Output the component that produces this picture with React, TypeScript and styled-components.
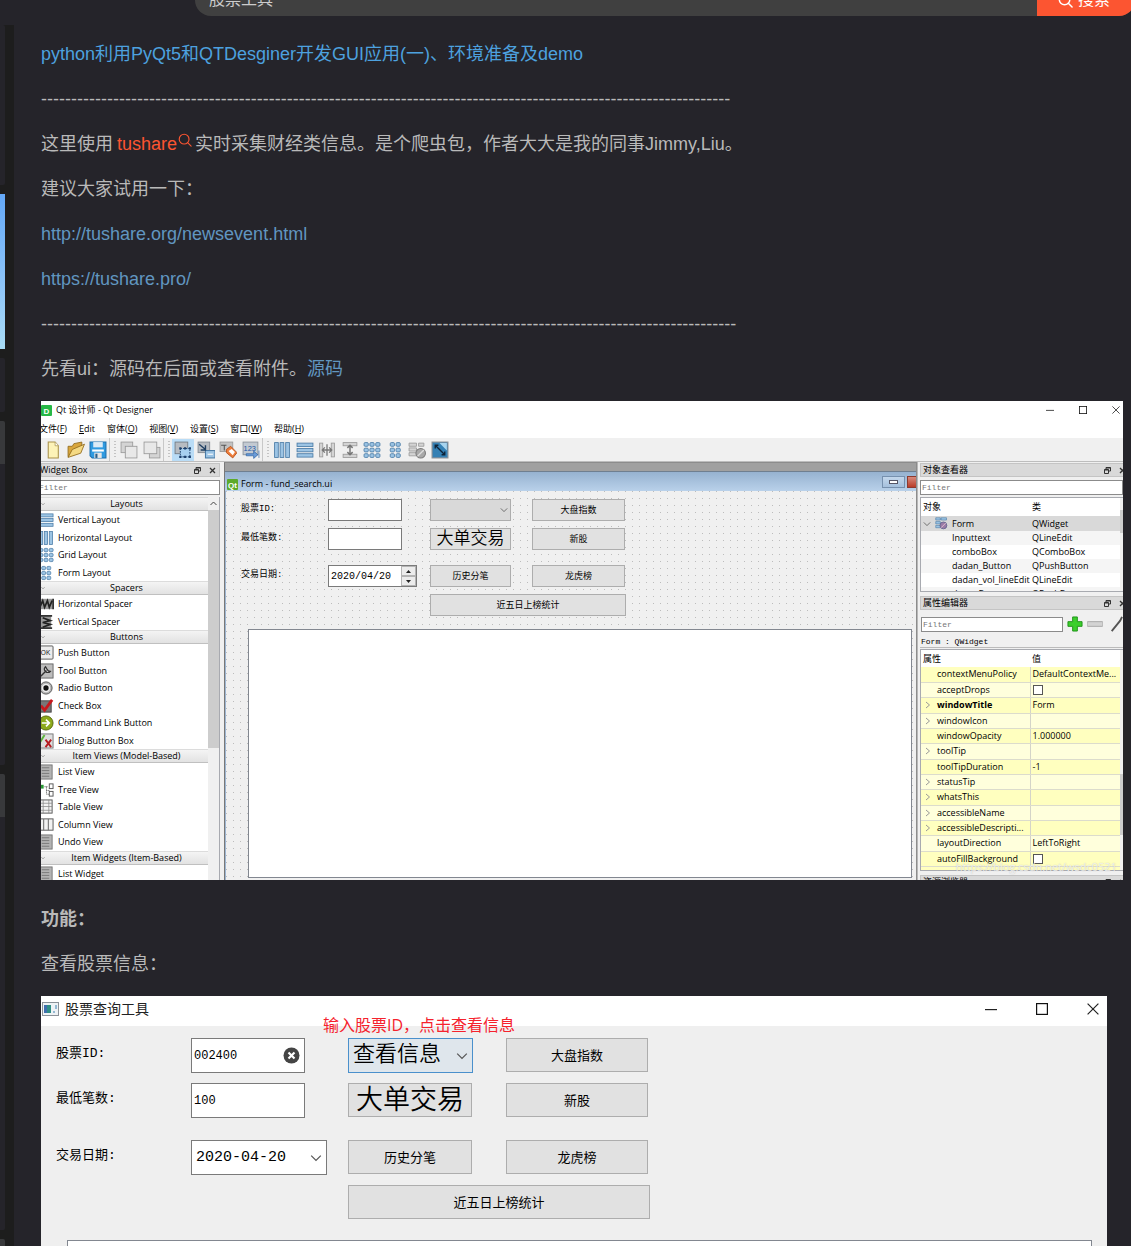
import React from 'react';
import styled, { createGlobalStyle, css } from 'styled-components';

const GlobalStyle = createGlobalStyle`
  *, *::before, *::after { box-sizing: border-box; }
  body { margin: 0; background: #1d1d1d; }
  button, input, select, textarea { font: inherit; color: inherit; margin: 0; padding: 0; border-radius: 0; }
  svg { display: block; flex: none; }
`;

const ui = `"Open Sans", "Noto Sans CJK SC", sans-serif`;
const mono = `"Liberation Mono", "Noto Sans CJK SC", monospace`;
const web = `"Liberation Sans", "Noto Sans CJK SC", sans-serif`;

/* ---------- page shell ---------- */

const Page = styled.div`
  height: 100vh;
  overflow: hidden;
  display: flex;
  flex-direction: column;
  font-family: ${web};
`;

const TopBar = styled.header`
  flex: none;
  height: 25px;
  overflow: hidden;
  display: flex;
  align-items: flex-end;
  padding: 0 0 9px 195px;
  background: #25242a;
`;

const SearchForm = styled.form`
  flex: 1;
  display: flex;
  height: 32px;
  margin-right: -4px;
  border-radius: 16px;
  overflow: hidden;
  background: #404040;
  font-size: 16px;
  line-height: 32px;
`;

const SearchInput = styled.input`
  flex: 1;
  min-width: 0;
  border: 0;
  padding-left: 14px;
  background: transparent;
  color: #ccc;
`;

const SearchButton = styled.button`
  width: 98px;
  display: flex;
  align-items: center;
  justify-content: center;
  gap: 5px;
  padding-right: 4px;
  border: 0;
  background: #fc5531;
  color: #fff;
`;

const Columns = styled.div`
  flex: 1;
  min-height: 0;
  display: flex;
  gap: 9px;
`;

const Side = styled.aside`
  flex: none;
  width: 5px;
  display: flex;
  flex-direction: column;
  gap: 9px;
`;

const SideCard = styled.div<{ $h: number; $head?: boolean }>`
  flex: none;
  height: ${p => p.$h}px;
  border-radius: 0 2px 2px 0;
  background: ${p => (p.$head ? 'linear-gradient(#38393b 43px, #25242a 43px)' : '#25242a')};
`;

const SidePicture = styled.div`
  flex: none;
  height: 155px;
  background: linear-gradient(#64a9f8, #8fc6f8 60%, #a9dcf5);
`;

const Article = styled.article`
  flex: 1;
  min-width: 0;
  display: flex;
  flex-direction: column;
  gap: 19px;
  padding: 16px 8px 0 27px;
  background: #25242a;
  color: #b9b9b9;
  font-size: 18px;
  line-height: 26px;
`;

const Para = styled.p`
  margin: 0;
  white-space: nowrap;
`;

const Link = styled.a<{ $bright?: boolean }>`
  color: ${p => (p.$bright ? '#4da1df' : '#6196c0')};
  text-decoration: none;
`;

const KeyLink = styled.a`
  color: #fc5531;
  text-decoration: none;
  margin: 0 3px 0 4px;
  svg { display: inline-block; margin-left: 1px; vertical-align: 3px; }
`;

/* ---------- designer window ---------- */

const Designer = styled.section`
  flex: none;
  height: 479px;
  margin-bottom: 7px;
  overflow: hidden;
  display: flex;
  flex-direction: column;
  position: relative;
  background: #f0f0f0;
  color: #000;
  font-family: ${ui};
  font-size: 9px;
  line-height: 14px;
`;

const TitleRow = styled.div`
  flex: none;
  height: 18px;
  display: flex;
  align-items: center;
  gap: 4px;
  background: #fff;
`;

const Caption = styled.span`
  flex: 1;
`;

const WindowButtons = styled.div<{ $gap: number; $pad: number }>`
  display: flex;
  align-items: center;
  gap: ${p => p.$gap}px;
  padding-right: ${p => p.$pad}px;
`;

const IconButton = styled.button`
  display: flex;
  align-items: center;
  justify-content: center;
  border: 0;
  background: transparent;
`;

const MenuRow = styled.nav`
  flex: none;
  height: 19px;
  display: flex;
  align-items: center;
  gap: 12px;
  margin-left: -2px;
  background: #fff;
`;

const MenuItem = styled.button`
  border: 0;
  background: transparent;
  white-space: nowrap;
  line-height: 14px;
`;

const ToolRow = styled.div`
  flex: none;
  height: 24px;
  display: flex;
  align-items: center;
  border-bottom: 1px solid #bdbdbd;
`;

const ToolGroup = styled.div`
  height: 23px;
  display: flex;
  align-items: center;
  padding: 0 0 0 1px;
`;

const Tool = styled.button<{ $on?: boolean }>`
  width: 22px;
  height: 22px;
  display: flex;
  align-items: center;
  justify-content: center;
  border: 0;
  background: ${p => (p.$on ? '#b9dcf6' : 'transparent')};
  &:nth-child(even) { width: 23px; }
`;

const Grip = styled.span`
  width: 8px;
  height: 23px;
  border-left: 1px solid #c8c8c8;
  background: repeating-linear-gradient(#c4c4c4 0 1px, transparent 1px 3px) 4px 3px / 2px 17px no-repeat;
`;

const Body = styled.div`
  flex: 1;
  min-height: 0;
  display: grid;
  grid-template-columns: 183px minmax(0, 1fr) 206px;
`;

const Dock = styled.div<{ $left?: boolean }>`
  min-width: 0;
  min-height: 0;
  display: flex;
  flex-direction: column;
  overflow: hidden;
  padding-top: 1px;
  ${p => (p.$left
    ? css`padding-right: 4px;`
    : css`border-left: 1px solid #b8b8b8; padding-left: 2px;`)}
`;

const DockHead = styled.div<{ $cut?: boolean }>`
  flex: none;
  height: 14px;
  display: flex;
  align-items: center;
  gap: 8px;
  padding: 0 3px;
  border: 1px solid #c4c4c4;
  background: #d9d9d9;
  ${p => (p.$cut ? css`padding-left: 0; text-indent: -2px;` : css`margin-right: -7px; padding-left: 2px;`)}
`;

const Filter = styled.input<{ $cut?: boolean }>`
  flex: 1;
  min-width: 0;
  height: 15px;
  border: 1px solid #8b8b8b;
  background: #fff;
  font-family: ${mono};
  font-size: 8px;
  padding-left: 1px;
  ${p => p.$cut && css`border-left: 0; padding: 0; text-indent: -2px;`}
  &::placeholder { color: #757575; opacity: 1; }
`;

const FilterRow = styled.div<{ $tall?: boolean }>`
  flex: none;
  height: ${p => (p.$tall ? 26 : 20)}px;
  display: flex;
  align-items: center;
  gap: 4px;
  padding: ${p => (p.$tall ? '2px 0 0 1px' : '0')};
`;

const WidgetList = styled.div`
  flex: 1;
  min-height: 0;
  display: flex;
  overflow: hidden;
  border-right: 1px solid #a8aab0;
  background: #fff;
`;

const Categories = styled.div`
  flex: 1;
`;

const Category = styled.h4`
  height: 14px;
  margin: 0;
  display: grid;
  grid-template-columns: 4px 1fr;
  align-items: center;
  text-align: center;
  font-weight: 400;
  line-height: 12px;
  border-top: 1px solid #dcdcdc;
  border-bottom: 1px solid #c0c0c0;
  background: linear-gradient(#f4f4f4, #e2e2e2);
`;

const Items = styled.ul`
  list-style: none;
  margin: 0 0 0 -3px;
  padding: 0;
`;

const Item = styled.li`
  height: 18px;
  display: flex;
  align-items: center;
  gap: 4px;
  &:nth-child(even) { height: 17px; }
`;

const ScrollTrack = styled.div`
  flex: none;
  width: 11px;
  background: #f0f0f0;
  display: flex;
  flex-direction: column;
  align-items: center;
`;

const ScrollArrow = styled.div`
  height: 13px;
  display: flex;
  align-items: center;
`;

const ScrollThumb = styled.div<{ $h: number }>`
  width: 100%;
  height: ${p => p.$h}px;
  background: #cdcdcd;
`;

const Mdi = styled.div`
  min-width: 0;
  display: flex;
  flex-direction: column;
  padding-top: 8px;
  border-left: 1px solid #787878;
  border-right: 1px solid #8c8c8c;
  border-top: 1px solid #8c8c8c;
  background: #a0a0a0;
`;

const FormTitle = styled.div`
  flex: none;
  height: 20px;
  display: flex;
  align-items: center;
  gap: 3px;
  padding: 5px 0 0 2px;
  border-top: 1px solid #6f7f90;
  background: linear-gradient(#96b2d0, #b9d1ea);
`;

const AeroButton = styled.button<{ $close?: boolean }>`
  width: ${p => (p.$close ? 9 : 23)}px;
  height: 12px;
  display: flex;
  align-items: center;
  justify-content: center;
  margin-bottom: 4px;
  border: 1px solid ${p => (p.$close ? '#8d3a2e' : '#7690ae')};
  border-right-width: ${p => (p.$close ? 0 : 1)}px;
  background: ${p => (p.$close ? 'linear-gradient(#d88a7c, #b93c28)' : 'linear-gradient(#c3d7ec, #a5c0dd)')};
`;

const Canvas = styled.div`
  flex: 1;
  min-height: 0;
  display: flex;
  flex-direction: column;
  padding: 8px 4px 2px 15px;
  border-left: 1px solid #9db6d2;
  background:
    linear-gradient(#c2c2c2, #c2c2c2) 0 0 / 1px 1px no-repeat,
    conic-gradient(from 270deg at 1px 1px, #bcbcbc 90deg, #f0f0f0 0) 0 0 / 7px 7px;
`;

const SmallGrid = styled.div`
  display: grid;
  grid-template-columns: 87px 102px 102px 94px;
  grid-template-rows: 29px 37px 29px 35px;
  align-items: start;
  font-family: ${mono};
`;

const BigGrid = styled(SmallGrid)`
  grid-template-columns: 135px 157px 158px 144px;
  grid-template-rows: 45px 57px 45px 55px;
  font-size: 13px;
`;

const FieldLabel = styled.label<{ $big?: boolean }>`
  line-height: ${p => (p.$big ? 32 : 21)}px;
  white-space: nowrap;
`;

const Field = styled.div<{ $w: number; $big?: boolean; $tone?: 'combo' | 'focus' }>`
  width: ${p => p.$w}px;
  height: ${p => (p.$big ? 35 : 22)}px;
  display: flex;
  align-items: center;
  padding: 0 ${p => (p.$big ? 4 : 2)}px;
  border: 1px solid ${p => (p.$tone === 'focus' ? '#4a90cc' : p.$tone ? '#adadad' : '#7a7a7a')};
  background: ${p => (p.$tone === 'focus' ? '#dfe6ec' : p.$tone ? '#d9d9d9' : '#fff')};
`;

const TextInput = styled.input<{ $size?: number }>`
  flex: 1;
  min-width: 0;
  height: 100%;
  border: 0;
  background: transparent;
  font-size: ${p => p.$size || 12}px;
  margin-left: ${p => (p.$size ? 0 : -2)}px;
`;

const Combo = styled.select`
  flex: 1;
  min-width: 0;
  height: 100%;
  border: 0;
  appearance: none;
  background: transparent;
  font-size: 22px;
  font-weight: 350;
`;

const Spin = styled.div`
  width: 15px;
  height: 20px;
  display: grid;
  grid-template-rows: 1fr 1fr;
  margin-right: -2px;
`;

const SpinButton = styled.button`
  display: flex;
  align-items: center;
  justify-content: center;
  border: 1px solid #b4b4b4;
  background: #ececec;
`;

const Push = styled.button<{ $w: number; $big?: boolean; $text?: number; $span?: boolean }>`
  width: ${p => p.$w}px;
  height: ${p => (p.$big ? 34 : 22)}px;
  padding-top: ${p => (p.$big ? 4 : 2)}px;
  overflow: hidden;
  border: 1px solid #adadad;
  background: #e1e1e1;
  white-space: nowrap;
  line-height: 18px;
  ${p => p.$text && css`font-size: ${p.$text}px; font-weight: 350;`}
  ${p => p.$text && p.$big && css`line-height: 28px;`}
  ${p => p.$span && css`grid-column: 3 / span 2;`}
`;

const ResultBox = styled.textarea<{ $h?: number }>`
  ${p => (p.$h ? css`height: ${p.$h}px;` : css`flex: 1; min-height: 0;`)}
  margin-left: ${p => (p.$h ? 11 : 7)}px;
  display: block;
  resize: none;
  border: 1px solid #828790;
  background: #fff;
`;

/* ---------- inspector and property tables ---------- */

const Pane = styled.div<{ $h: number }>`
  flex: none;
  height: ${p => p.$h}px;
  display: flex;
  overflow: hidden;
  border: 1px solid #a8aab0;
  border-right: 0;
  background: #fff;
`;

const Table = styled.table`
  flex: 1;
  width: 100%;
  table-layout: fixed;
  border-collapse: collapse;
  align-self: flex-start;
  th, td {
    padding: 0 0 0 2px;
    font-weight: 400;
    text-align: left;
    white-space: nowrap;
    overflow: hidden;
    line-height: 12px;
  }
  th:first-child, td:first-child { width: 109px; }
`;

const TreeTr = styled.tr<{ $bg: string; $h: number }>`
  height: ${p => p.$h}px;
  background: ${p => p.$bg};
`;

const PropTr = styled.tr<{ $dark?: boolean; $bold?: boolean }>`
  height: 15px;
  background: ${p => (p.$dark ? '#ffffbf' : '#ffffdc')};
  &:nth-child(3n) { height: 16px; }
  td { border-bottom: 1px solid #dcdccc; }
  td:first-child { border-right: 1px solid #d4d4c8; ${p => p.$bold && css`font-weight: 700;`} }
`;

const Cell = styled.span<{ $indent?: number }>`
  display: flex;
  align-items: center;
  gap: 4px;
  padding-left: ${p => p.$indent || 0}px;
`;

const ArrowSlot = styled.span`
  width: 10px;
  flex: none;
  padding-left: 2px;
`;

const Tick = styled.input`
  display: block;
  appearance: none;
  width: 10px;
  height: 10px;
  border: 1px solid #555;
  background: #fff;
`;

const ThinTrack = styled.div<{ $top: number }>`
  flex: none;
  width: 3px;
  padding-top: ${p => p.$top}px;
  background: #f0f0f0;
`;

const ObjectBar = styled.div`
  flex: none;
  height: 12px;
  margin-bottom: 1px;
  font-family: ${mono};
  font-size: 8px;
  line-height: 11px;
  padding-left: 1px;
  border-bottom: 1px solid #bbb;
`;

const Spacer = styled.div<{ $h: number }>`
  flex: none;
  height: ${p => p.$h}px;
`;

const Watermark = styled.span`
  position: absolute;
  right: 6px;
  bottom: 5px;
  font-size: 11px;
  line-height: 16px;
  color: rgba(255, 255, 255, 0.8);
  text-shadow: 0 0 1px rgba(120, 120, 120, 0.5);
`;

/* ---------- stock tool window ---------- */

const StockTool = styled.section`
  flex: none;
  position: relative;
  margin-right: 16px;
  background: #efefef;
  color: #000;
  font-family: ${ui};
`;

const StockTitle = styled.div`
  height: 30px;
  display: flex;
  align-items: center;
  gap: 6px;
  padding: 0 0 5px 1px;
  background: #fff;
  font-size: 14px;
  color: #222;
`;

const StockBody = styled.div`
  display: flex;
  flex-direction: column;
  padding: 12px 15px 0;
`;

const Note = styled.span`
  position: absolute;
  left: 282px;
  top: 19px;
  font-size: 16px;
  line-height: 20px;
  color: #f5222d;
`;

/* ---------- drawings ---------- */

const Search = ({ size = 16, w = 1.6 }: { size?: number; w?: number }) => (
  <svg width={size} height={size} viewBox="0 0 16 16" fill="none" stroke="currentColor" strokeWidth={w} strokeLinecap="round">
    <circle cx="7" cy="7" r="5.6" />
    <path d="M11 11l4 4" />
  </svg>
);

const Chevron = ({ size = 8, color = '#555' }: { size?: number; color?: string }) => (
  <svg width={size} height={size} viewBox="0 0 10 10" fill="none" stroke={color} strokeWidth="1"><path d="M1 3l4 4 4-4" /></svg>
);

const ChevronRight = () => (
  <svg width="6" height="8" viewBox="0 0 6 8" fill="none" stroke="#999"><path d="M1 1l3.5 3L1 7" /></svg>
);

const WinMin = ({ s }: { s: number }) => <svg width={s} height={s} viewBox="0 0 10 10" stroke="#222"><path d="M0 5.5h10" /></svg>;
const WinMax = ({ s }: { s: number }) => <svg width={s} height={s} viewBox="0 0 10 10" fill="none" stroke="#111"><rect x=".5" y=".5" width="9" height="9" /></svg>;
const WinClose = ({ s }: { s: number }) => <svg width={s} height={s} viewBox="0 0 10 10" stroke="#222"><path d="M.5.5l9 9M9.5.5l-9 9" /></svg>;

const Float = () => (
  <svg width="7" height="7" viewBox="0 0 7 7" fill="none" stroke="#333"><path d="M2 2V.5h4.500v3.500H5M2 1h4.500M.5 2.500h4v4h-4zM.5 3h4" /></svg>
);
const DockClose = () => <svg width="7" height="7" viewBox="0 0 7 7" stroke="#333" strokeWidth="1.300"><path d="M1 1l5 5M6 1L1 6" /></svg>;

const Badge = ({ text, w }: { text: string; w: number }) => (
  <svg width={w} height="11" viewBox={`0 0 ${w} 11`}>
    <rect width={w} height="11" rx="1" fill={text === 'D' ? '#27b847' : '#5caa2a'} />
    <text x={w / 2} y="8.500" textAnchor="middle" fontSize="8" fontWeight="700" fill="#fff" fontFamily="Liberation Sans, sans-serif">{text}</text>
  </svg>
);

const bar = { fill: '#9cc4e4', stroke: '#4a7ba6', strokeWidth: 0.8 };
const gray = { fill: '#d4d4d4', stroke: '#9a9a9a', strokeWidth: 0.8 };

const drawings: Record<string, React.ReactNode> = {
  file: <><path d="M4 1h6.500L13.500 4.500V16H4z" fill="#fdf3b8" stroke="#a9924a" /><path d="M10.500 1v3.500h3" fill="#fff" stroke="#a9924a" strokeWidth=".7" /></>,
  open: <><path d="M1 15V5h4l1.500-2.500L14 1v5" fill="#d9a63c" stroke="#8f6a1c" strokeWidth=".8" /><path d="M1 15.500L5 8l11.500-5-3.500 8.500z" fill="#f4d983" stroke="#8f6a1c" strokeWidth=".8" /></>,
  save: <><path d="M1 1h15v15H3l-2-2z" fill="#2f9ae0" stroke="#1b6fae" /><path d="M4 1h9v5H4z" fill="#dcebf6" /><path d="M3 8h11v2H3z" fill="#fff" /><path d="M5 11h7v5H5z" fill="#e6e6e6" /><path d="M6 12h2v4H6z" fill="#2a5e88" /></>,
  front: <><rect x="1" y="1" width="11" height="10" {...gray} /><rect x="5" y="5" width="11" height="11" fill="#e8e8e8" stroke="#999" strokeWidth=".8" /></>,
  back: <><rect x="6" y="6" width="10" height="10" {...gray} /><rect x="1" y="1" width="12" height="11" fill="#e8e8e8" stroke="#999" strokeWidth=".8" /></>,
  widgets: <><rect x="1" y="1" width="12" height="11" fill="#b7bcc2" stroke="#707880" strokeWidth=".8" /><rect x="6" y="7" width="9" height="8" fill="#a7d0f0" stroke="#284f7a" strokeDasharray="1.500 1" /><path d="M5 6h2v2H5zM14 6h2v2h-2zM5 14h2v2H5zM14 14h2v2h-2zM9.500 6h2v2h-2zM9.500 14h2v2h-2z" fill="#1c3f6b" /></>,
  signals: <><rect x="1" y="1" width="11" height="10" fill="#b7bcc2" stroke="#808890" strokeWidth=".8" /><rect x="8" y="9" width="9" height="7" fill="#9cc4e4" stroke="#4a7ba6" /><path d="M10 12.500h5" stroke="#fff" /><path d="M2 3l6 5M8 4v4.500H3.500" stroke="#1f3f62" strokeWidth="1.300" fill="none" /></>,
  buddies: <><rect x="1" y="1" width="12" height="9" fill="#c2c2c2" stroke="#999" strokeWidth=".8" /><path d="M2 4h5M5 4v5" stroke="#555" /><path d="M7 8l4-3 6 6-4 5-6-5z" fill="#ee7d3b" stroke="#b34d16" strokeWidth=".8" /><path d="M9 9.500l3-2 3 3-2 3z" fill="#fff" /></>,
  tabs: <><rect x="1" y="1" width="14" height="12" fill="#c3cad2" stroke="#8a929a" strokeWidth=".8" /><text x="1.500" y="9" fontSize="7" fill="#1d58a8" fontFamily="Liberation Sans, sans-serif">123</text><path d="M4 12h7V9.500l4 3.500-4 3.500V14H4zM16 9v7" fill="#6b9cd8" stroke="#255a9f" strokeWidth=".6" /></>,
  hbox: <><rect x="1.500" y="1.500" width="3.500" height="14" {...bar} /><rect x="6.700" y="1.500" width="3.500" height="14" {...bar} /><rect x="12" y="1.500" width="3.500" height="14" {...bar} /></>,
  vbox: <><rect x="1" y="2" width="15" height="3.200" {...bar} /><rect x="1" y="7" width="15" height="3.200" {...bar} /><rect x="1" y="12" width="15" height="3.200" {...bar} /></>,
  hsplit: <><rect x="1.500" y="2" width="3" height="13" {...gray} /><rect x="12.500" y="2" width="3" height="13" {...gray} /><path d="M8.500 3v11M4 8.500h9M6.500 6L4 8.500 6.500 11M10.500 6L13 8.500 10.500 11" stroke="#777" strokeWidth="1.200" fill="none" /></>,
  vsplit: <><rect x="2" y="1.500" width="13" height="3" {...gray} /><rect x="2" y="12.500" width="13" height="3" {...gray} /><path d="M8.500 4v9M6 6.500L8.500 4 11 6.500M6 10.500L8.500 13l2.500-2.500" stroke="#777" strokeWidth="1.400" fill="none" /></>,
  grid: <>{[1.5, 6.8, 12].map(y => [1, 6.5, 12].map(x => <rect key={`${x}-${y}`} x={x} y={y} width="4" height="3.500" rx="1" {...bar} />))}</>,
  form: <>{[1.5, 6.8, 12].map(y => [4, 9.5].map(x => <rect key={`${x}-${y}`} x={x} y={y} width="4" height="3.500" rx="1" {...bar} />))}</>,
  breakl: <><path d="M1 2h7v3H1zM10 2h5v3h-5zM1 6.500h7v3H1zM1 11h7v3H1z" {...gray} /><circle cx="12" cy="11.500" r="4.500" fill="#a8a8a8" stroke="#7c7c7c" /><path d="M9 14.500l6-6" stroke="#ddd" strokeWidth="1.300" /></>,
  adjust: <><rect x="1" y="1" width="15" height="15" fill="#3480b4" stroke="#8a8f94" /><path d="M8 2h7v7z" fill="#a8d4ee" /><path d="M4 4l9 9M4 7V4h3M13 10v3h-3" stroke="#0d2338" strokeWidth="1.300" fill="none" /></>,
  hspace: <><path d="M1 3v11M16 3v11" stroke="#333" strokeWidth="2" /><path d="M2 3h13v11H2z" fill="#999" /><path d="M2 12l3-7 2 7 3-7 2 7 3-7" stroke="#222" strokeWidth="1.800" fill="none" /></>,
  vspace: <><path d="M3 2h11v13H3z" fill="#999" /><path d="M2 2h13M2 15h13" stroke="#333" strokeWidth="2" /><path d="M5 4l8 3-8 2 8 2-8 3" stroke="#222" strokeWidth="1.800" fill="none" /></>,
  ok: <><rect x="-2" y="1" width="18" height="14" rx="1" fill="#ececec" stroke="#555" /><text x="3" y="11" fontSize="7" fill="#222" fontFamily="Liberation Sans, sans-serif">OK</text></>,
  tool: <><rect x="0" y="1" width="16" height="15" fill="#bdbdbd" stroke="#666" /><path d="M3 14l6-6M8 4a3.500 3.500 0 105 5l-2-.5-1.500-2z" stroke="#333" strokeWidth="1.400" fill="#e4e4e4" /></>,
  radio: <><circle cx="8.500" cy="8.500" r="6.500" fill="#b5b5b5" stroke="#555" /><circle cx="8.500" cy="8.500" r="4.500" fill="#eee" /><circle cx="8.500" cy="8.500" r="2.800" fill="#111" /></>,
  check: <><rect x="2" y="3" width="12" height="12" fill="#777" stroke="#444" /><path d="M3 8l4 5L15 2" stroke="#c8191e" strokeWidth="3" fill="none" /></>,
  command: <><circle cx="8.500" cy="8.500" r="7.500" fill="#8ca91b" stroke="#56690c" /><path d="M4 8.500h8M8.500 5l3.500 3.500L8.500 12" stroke="#fff" strokeWidth="1.800" fill="none" /></>,
  dialog: <><rect x="-1" y="1" width="17" height="15" fill="#dedede" stroke="#777" /><path d="M2 10L7 2" stroke="#5eb53b" strokeWidth="2" /><path d="M8 7l6 8M14 7l-6 8" stroke="#b51d22" strokeWidth="2" /></>,
  list: <><rect x="0" y="1" width="15" height="15" fill="#b3b3b3" stroke="#777" /><path d="M4 4h8M4 7h8M4 10h8M4 13h8" stroke="#777" /></>,
  tree: <><rect x="2" y="3" width="4" height="4" fill="#2a9a35" /><path d="M7 5h3M9 5v8M9 9h3M9 13h3" stroke="#444" strokeDasharray="1 1" /><rect x="12" y="2" width="4" height="5" fill="#fff" stroke="#555" /><rect x="12" y="10" width="4" height="5" fill="#fff" stroke="#555" /></>,
  table: <><rect x="-1" y="1" width="16" height="14" fill="#f2f2f2" stroke="#555" /><path d="M5.500 1v14M11.500 1v14M0 4.500h15M0 8h15M0 12h15" stroke="#888" strokeWidth=".8" /></>,
  column: <><rect x="-1" y="2" width="17" height="12" fill="#f2f2f2" stroke="#555" /><path d="M6 2v12M11 2v12" stroke="#777" strokeWidth="1.200" /></>,
  plus: <path d="M6 1h5v5h5v5h-5v5H6v-5H1V6h5z" fill="#3ccf2c" stroke="#1e9217" />,
  minus: <rect x="0" y="6" width="17" height="5" rx="1" fill="#d3d3d3" stroke="#a5a5a5" />,
  wrench: <path d="M5 16L14 5l2-4" stroke="#555" strokeWidth="2" fill="none" />,
  object: <><path d="M1 1h6v3H1zM8 1h7v3H8zM1 6h6v3H1zM1 11h6v3H1z" {...bar} /><circle cx="11" cy="11" r="4.500" fill="#9a7ba6" stroke="#5a5f8a" /><path d="M8 14l6-6" stroke="#e4c4d0" strokeWidth="1.200" /></>,
};

const Drawing = ({ name, size = 18 }: { name: string; size?: number }) => (
  <svg width={size} height={size} viewBox="0 0 17 17">{drawings[name]}</svg>
);

const AppGlyph = () => (
  <svg width="17" height="14" viewBox="0 0 17 14">
    <rect x=".5" y=".5" width="16" height="13" fill="#eef2f5" stroke="#8b9299" />
    <rect x="2" y="3" width="7" height="8" fill="#2f8f86" />
    <rect x="2" y="3" width="3" height="8" fill="#3f6fae" />
    <path d="M11 10h2M14 3v4" stroke="#3a7fb0" />
  </svg>
);

const ClearGlyph = () => (
  <svg width="17" height="17" viewBox="0 0 17 17">
    <circle cx="8.500" cy="8.500" r="8" fill="#444" />
    <path d="M5.500 5.500l6 6M11.500 5.500l-6 6" stroke="#fff" strokeWidth="2.200" />
  </svg>
);

/* ---------- data ---------- */

const menus = [['文件', 'F'], ['Edit', ''], ['窗体', 'O'], ['视图', 'V'], ['设置', 'S'], ['窗口', 'W'], ['帮助', 'H']];

const toolGroups = [
  ['file', 'open', 'save'],
  ['front', 'back'],
  ['widgets', 'signals', 'buddies', 'tabs'],
  ['hbox', 'vbox', 'hsplit', 'vsplit', 'grid', 'form', 'breakl', 'adjust'],
];

const categories: [string, [string, string][]][] = [
  ['Layouts', [['vbox', 'Vertical Layout'], ['hbox', 'Horizontal Layout'], ['grid', 'Grid Layout'], ['form', 'Form Layout']]],
  ['Spacers', [['hspace', 'Horizontal Spacer'], ['vspace', 'Vertical Spacer']]],
  ['Buttons', [['ok', 'Push Button'], ['tool', 'Tool Button'], ['radio', 'Radio Button'], ['check', 'Check Box'], ['command', 'Command Link Button'], ['dialog', 'Dialog Button Box']]],
  ['Item Views (Model-Based)', [['list', 'List View'], ['tree', 'Tree View'], ['table', 'Table View'], ['column', 'Column View'], ['list', 'Undo View']]],
  ['Item Widgets (Item-Based)', [['list', 'List Widget']]],
];

const objects = [
  ['Inputtext', 'QLineEdit'],
  ['comboBox', 'QComboBox'],
  ['dadan_Button', 'QPushButton'],
  ['dadan_vol_lineEdit', 'QLineEdit'],
  ['dapanButton', 'QPushButton'],
];

type Prop = { name: string; value?: string; tick?: boolean; more?: boolean; bold?: boolean };
const props: Prop[] = [
  { name: 'contextMenuPolicy', value: 'DefaultContextMe...' },
  { name: 'acceptDrops', tick: true },
  { name: 'windowTitle', value: 'Form', more: true, bold: true },
  { name: 'windowIcon', more: true },
  { name: 'windowOpacity', value: '1.000000' },
  { name: 'toolTip', more: true },
  { name: 'toolTipDuration', value: '-1' },
  { name: 'statusTip', more: true },
  { name: 'whatsThis', more: true },
  { name: 'accessibleName', more: true },
  { name: 'accessibleDescripti...', more: true },
  { name: 'layoutDirection', value: 'LeftToRight' },
  { name: 'autoFillBackground', tick: true },
];

/* ---------- parts ---------- */

const WidgetBox = () => (
  <Dock $left>
    <DockHead $cut><Caption>Widget Box</Caption><Float /><DockClose /></DockHead>
    <FilterRow><Filter $cut placeholder="Filter" aria-label="Filter widgets" /></FilterRow>
    <WidgetList>
      <Categories>
        {categories.map(([title, items]) => (
          <React.Fragment key={title}>
            <Category><Chevron size={4} color="#333" /><span>{title}</span></Category>
            <Items>
              {items.map(([icon, name]) => <Item key={name}><Drawing name={icon} size={16} />{name}</Item>)}
            </Items>
          </React.Fragment>
        ))}
      </Categories>
      <ScrollTrack>
        <ScrollArrow><svg width="7" height="5" viewBox="0 0 7 5" fill="none" stroke="#444"><path d="M.5 4l3-3 3 3" /></svg></ScrollArrow>
        <ScrollThumb $h={238} />
      </ScrollTrack>
    </WidgetList>
  </Dock>
);

const FormEditor = () => (
  <Mdi>
    <FormTitle>
      <Badge text="Qt" w={11} />
      <Caption>Form - fund_search.ui</Caption>
      <WindowButtons $gap={2} $pad={0}>
        <AeroButton aria-label="Minimize form"><svg width="9" height="4" viewBox="0 0 9 4"><rect x=".5" y=".5" width="8" height="3" fill="#fff" stroke="#556" /></svg></AeroButton>
        <AeroButton $close aria-label="Close form" />
      </WindowButtons>
    </FormTitle>
    <Canvas>
      <SmallGrid>
        <FieldLabel htmlFor="d-id">股票ID:</FieldLabel>
        <Field $w={74}><TextInput id="d-id" /></Field>
        <Field $w={81} $tone="combo"><Combo aria-label="查看" /><Chevron /></Field>
        <Push $w={93}>大盘指数</Push>
        <FieldLabel htmlFor="d-min">最低笔数:</FieldLabel>
        <Field $w={74}><TextInput id="d-min" /></Field>
        <Push $w={81} $text={17}>大单交易</Push>
        <Push $w={93}>新股</Push>
        <FieldLabel htmlFor="d-date">交易日期:</FieldLabel>
        <Field $w={89}>
          <TextInput id="d-date" $size={10} defaultValue="2020/04/20" />
          <Spin>
            <SpinButton aria-label="Later"><svg width="5" height="3" viewBox="0 0 5 3"><path d="M0 3l2.500-3L5 3z" fill="#222" /></svg></SpinButton>
            <SpinButton aria-label="Earlier"><svg width="5" height="3" viewBox="0 0 5 3"><path d="M0 0l2.500 3L5 0z" fill="#222" /></svg></SpinButton>
          </Spin>
        </Field>
        <Push $w={81}>历史分笔</Push>
        <Push $w={93}>龙虎榜</Push>
        <Push $w={196} $span>近五日上榜统计</Push>
      </SmallGrid>
      <ResultBox aria-label="Form result" />
    </Canvas>
  </Mdi>
);

const Inspectors = () => (
  <Dock>
    <DockHead><Caption>对象查看器</Caption><Float /><DockClose /></DockHead>
    <FilterRow><Filter placeholder="Filter" aria-label="Filter objects" /></FilterRow>
    <Pane $h={95}>
      <Table>
        <thead><TreeTr $bg="#fff" $h={18}><th>对象</th><th>类</th></TreeTr></thead>
        <tbody>
          <TreeTr $bg="#d9d9d9" $h={15}>
            <td><Cell><Chevron /><Drawing name="object" size={13} />Form</Cell></td>
            <td>QWidget</td>
          </TreeTr>
          {objects.map(([name, type], i) => (
            <TreeTr key={name} $bg={i % 2 ? '#fff' : '#f5f5f5'} $h={14}>
              <td><Cell $indent={29}>{name}</Cell></td>
              <td>{type}</td>
            </TreeTr>
          ))}
        </tbody>
      </Table>
      <ThinTrack $top={12}><ScrollThumb $h={23} /></ThinTrack>
    </Pane>
    <Spacer $h={4} />
    <DockHead><Caption>属性编辑器</Caption><Float /><DockClose /></DockHead>
    <FilterRow $tall>
      <Filter placeholder="Filter" aria-label="Filter properties" />
      <IconButton aria-label="Add property"><Drawing name="plus" size={16} /></IconButton>
      <IconButton aria-label="Remove property"><Drawing name="minus" size={16} /></IconButton>
      <IconButton aria-label="Configure"><Drawing name="wrench" size={16} /></IconButton>
    </FilterRow>
    <ObjectBar>Form : QWidget</ObjectBar>
    <Pane $h={222}>
      <Table>
        <thead><TreeTr $bg="#fff" $h={17}><th>属性</th><th>值</th></TreeTr></thead>
        <tbody>
          {props.map((p, i) => (
            <PropTr key={p.name} $dark={i % 2 === 0} $bold={p.bold}>
              <td><Cell><ArrowSlot>{p.more && <ChevronRight />}</ArrowSlot>{p.name}</Cell></td>
              <td>{p.tick ? <Tick type="checkbox" aria-label={p.name} /> : p.value}</td>
            </PropTr>
          ))}
          <PropTr $dark><td /><td /></PropTr>
        </tbody>
      </Table>
      <ThinTrack $top={124}><ScrollThumb $h={61} /></ThinTrack>
    </Pane>
    <Spacer $h={4} />
    <DockHead><Caption>资源浏览器</Caption><Float /><DockClose /></DockHead>
  </Dock>
);

const DesignerWindow = () => (
  <Designer>
    <TitleRow>
      <Badge text="D" w={11} />
      <Caption>Qt 设计师 - Qt Designer</Caption>
      <WindowButtons $gap={25} $pad={3}>
        <IconButton aria-label="Minimize"><WinMin s={8} /></IconButton>
        <IconButton aria-label="Maximize"><WinMax s={8} /></IconButton>
        <IconButton aria-label="Close"><WinClose s={8} /></IconButton>
      </WindowButtons>
    </TitleRow>
    <MenuRow>
      {menus.map(([name, key]) => (
        <MenuItem key={name}>{key ? <>{name}(<u>{key}</u>)</> : <><u>E</u>dit</>}</MenuItem>
      ))}
    </MenuRow>
    <ToolRow>
      {toolGroups.map((group, i) => (
        <React.Fragment key={group[0]}>
          {i > 0 && <Grip />}
          <ToolGroup>
            {group.map(name => <Tool key={name} $on={name === 'widgets'} aria-label={name}><Drawing name={name} /></Tool>)}
          </ToolGroup>
        </React.Fragment>
      ))}
    </ToolRow>
    <Body>
      <WidgetBox />
      <FormEditor />
      <Inspectors />
    </Body>
    <Watermark>https://blog.csdn.net/wsdc0521</Watermark>
  </Designer>
);

const StockWindow = () => (
  <StockTool>
    <StockTitle>
      <AppGlyph />
      <Caption>股票查询工具</Caption>
      <WindowButtons $gap={39} $pad={8}>
        <IconButton aria-label="Minimize"><WinMin s={12} /></IconButton>
        <IconButton aria-label="Maximize"><WinMax s={12} /></IconButton>
        <IconButton aria-label="Close"><WinClose s={12} /></IconButton>
      </WindowButtons>
    </StockTitle>
    <Note>输入股票ID，点击查看信息</Note>
    <StockBody>
      <BigGrid>
        <FieldLabel $big htmlFor="s-id">股票ID:</FieldLabel>
        <Field $big $w={114}><TextInput id="s-id" defaultValue="002400" /><IconButton aria-label="Clear"><ClearGlyph /></IconButton></Field>
        <Field $big $w={125} $tone="focus">
          <Combo aria-label="查询类型" defaultValue="查看信息"><option>查看信息</option></Combo>
          <Chevron size={12} />
        </Field>
        <Push $big $w={142}>大盘指数</Push>
        <FieldLabel $big htmlFor="s-min">最低笔数:</FieldLabel>
        <Field $big $w={114}><TextInput id="s-min" defaultValue="100" /></Field>
        <Push $big $w={124} $text={27}>大单交易</Push>
        <Push $big $w={142}>新股</Push>
        <FieldLabel $big htmlFor="s-date">交易日期:</FieldLabel>
        <Field $big $w={136}><TextInput id="s-date" $size={15} defaultValue="2020-04-20" /><Chevron size={12} /></Field>
        <Push $big $w={124}>历史分笔</Push>
        <Push $big $w={142}>龙虎榜</Push>
        <Push $big $w={302} $span>近五日上榜统计</Push>
      </BigGrid>
      <ResultBox $h={240} aria-label="查询结果" />
    </StockBody>
  </StockTool>
);

export default function App() {
  return (
    <>
      <GlobalStyle />
      <Page>
        <TopBar>
          <SearchForm>
            <SearchInput aria-label="搜索内容" defaultValue="股票工具" />
            <SearchButton type="button"><Search size={15} />搜索</SearchButton>
          </SearchForm>
        </TopBar>
        <Columns>
          <Side>
            <SideCard $h={160} />
            <SidePicture />
            <SideCard $h={54} />
            <SideCard $h={344} $head />
            <SideCard $h={456} $head />
            <SideCard $h={160} $head />
          </Side>
          <Article>
            <Para><Link $bright href="#demo">python利用PyQt5和QTDesginer开发GUI应用(一)、环境准备及demo</Link></Para>
            <Para>{'-'.repeat(115)}</Para>
            <Para>这里使用<KeyLink href="#tushare">tushare<Search size={14} w={1.3} /></KeyLink>实时采集财经类信息。是个爬虫包，作者大大是我的同事Jimmy,Liu。</Para>
            <Para>建议大家试用一下：</Para>
            <Para><Link href="#newsevent">http://tushare.org/newsevent.html</Link></Para>
            <Para><Link href="#pro">https://tushare.pro/</Link></Para>
            <Para>{'-'.repeat(116)}</Para>
            <Para>先看ui：源码在后面或查看附件。<Link href="#source">源码</Link></Para>
            <DesignerWindow />
            <Para><strong>功能：</strong></Para>
            <Para>查看股票信息：</Para>
            <StockWindow />
          </Article>
        </Columns>
      </Page>
    </>
  );
}
